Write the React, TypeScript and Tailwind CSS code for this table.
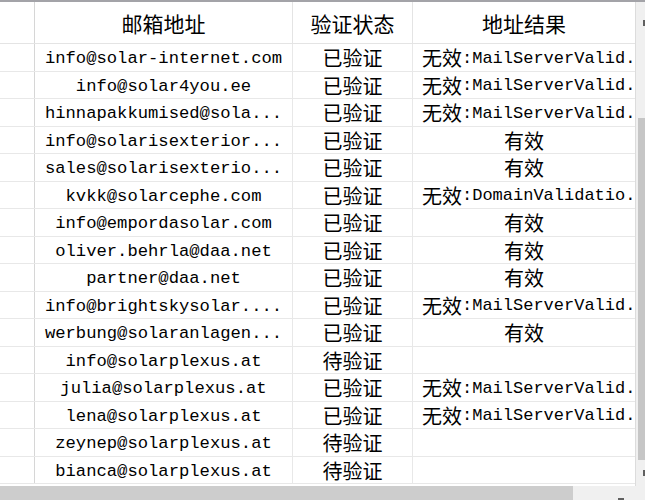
import React from "react";

type Row = { email: string; status: string; result: string };

const rows: Row[] = [
  { email: "info@solar-internet.com", status: "已验证", result: "无效:MailServerValid." },
  { email: "info@solar4you.ee", status: "已验证", result: "无效:MailServerValid." },
  { email: "hinnapakkumised@sola...", status: "已验证", result: "无效:MailServerValid." },
  { email: "info@solarisexterior...", status: "已验证", result: "有效" },
  { email: "sales@solarisexterio...", status: "已验证", result: "有效" },
  { email: "kvkk@solarcephe.com", status: "已验证", result: "无效:DomainValidatio." },
  { email: "info@empordasolar.com", status: "已验证", result: "有效" },
  { email: "oliver.behrla@daa.net", status: "已验证", result: "有效" },
  { email: "partner@daa.net", status: "已验证", result: "有效" },
  { email: "info@brightskysolar....", status: "已验证", result: "无效:MailServerValid." },
  { email: "werbung@solaranlagen...", status: "已验证", result: "有效" },
  { email: "info@solarplexus.at", status: "待验证", result: "" },
  { email: "julia@solarplexus.at", status: "已验证", result: "无效:MailServerValid." },
  { email: "lena@solarplexus.at", status: "已验证", result: "无效:MailServerValid." },
  { email: "zeynep@solarplexus.at", status: "待验证", result: "" },
  { email: "bianca@solarplexus.at", status: "待验证", result: "" },
];

const cjk = { fontFamily: '"Noto Sans CJK SC", "Noto Sans", sans-serif' };
const mono = { fontFamily: '"Liberation Mono", "DejaVu Sans Mono", monospace' };

function Result({ text }: { text: string }) {
  if (!text) return null;
  if (text.startsWith("无效")) {
    const rest = text.slice(2);
    return (
      <div className="pl-[9px] pt-[2px] whitespace-nowrap flex items-center h-full">
        <span className="text-[20px] leading-none" style={cjk}>无效</span>
        <span className="text-[17px] leading-none" style={mono}>{rest}</span>
      </div>
    );
  }
  return (
    <div className="flex items-center justify-center h-full pt-[2px]">
      <span className="text-[20px] leading-none" style={cjk}>{text}</span>
    </div>
  );
}

export default function App() {
  return (
    <div className="w-[645px] h-[500px] bg-white overflow-hidden flex flex-col text-black">
      <div className="h-[2px] bg-[#a3a3a8] shrink-0" />
      <div className="flex flex-1 min-h-0">
        <div className="flex flex-col w-[635px]">
          {/* header */}
          <div className="flex h-[42px] border-b border-[#e4e4e4]">
            <div className="w-[35px] border-r border-[#d6d6d6]" />
            <div className="w-[258px] border-r border-[#e4e4e4] flex items-center justify-center pt-[2px]">
              <span className="text-[21px] leading-none" style={cjk}>邮箱地址</span>
            </div>
            <div className="w-[120px] border-r border-[#e4e4e4] flex items-center justify-center pt-[2px]">
              <span className="text-[21px] leading-none" style={cjk}>验证状态</span>
            </div>
            <div className="w-[222px] flex items-center justify-center pt-[2px]">
              <span className="text-[21px] leading-none" style={cjk}>地址结果</span>
            </div>
          </div>
          {rows.map((r, i) => (
            <div key={i} className="flex h-[27.5px] border-b border-[#e8e8e8] shrink-0">
              <div className="w-[35px] border-r border-[#d6d6d6]" />
              <div className="w-[258px] border-r border-[#e8e8e8] flex items-center justify-center pt-[3px]">
                <span className="text-[17.2px] leading-none whitespace-nowrap" style={mono}>{r.email}</span>
              </div>
              <div className="w-[120px] border-r border-[#e8e8e8] flex items-center justify-center pt-[2px]">
                <span className="text-[20px] leading-none" style={cjk}>{r.status}</span>
              </div>
              <div className="w-[222px]">
                <Result text={r.result} />
              </div>
            </div>
          ))}
        </div>
        {/* vertical scrollbar */}
        <div className="w-[10px] flex flex-col bg-[#f0f0f0] border-l border-[#dcdcdc]">
          <div className="h-[42px] relative">
            <div className="absolute right-0 top-[18px] w-[2px] h-[6px] bg-[#606060]" />
          </div>
          <div className="h-[74px]" />
          <div className="h-[342px] ml-[2px] bg-[#c6c6c6]" />
          <div className="flex-1 relative">
            <div className="absolute right-0 top-[10px] w-[2px] h-[6px] bg-[#606060]" />
          </div>
        </div>
      </div>
      {/* horizontal scrollbar */}
      <div className="h-[14px] shrink-0 flex bg-[#f0f0f0]">
        <div className="w-[573px] bg-[#cdcdcd]" />
        <div className="flex-1 relative">
          <div className="absolute left-[45px] bottom-0 w-[6px] h-[2px] bg-[#606060]" />
        </div>
      </div>
    </div>
  );
}
